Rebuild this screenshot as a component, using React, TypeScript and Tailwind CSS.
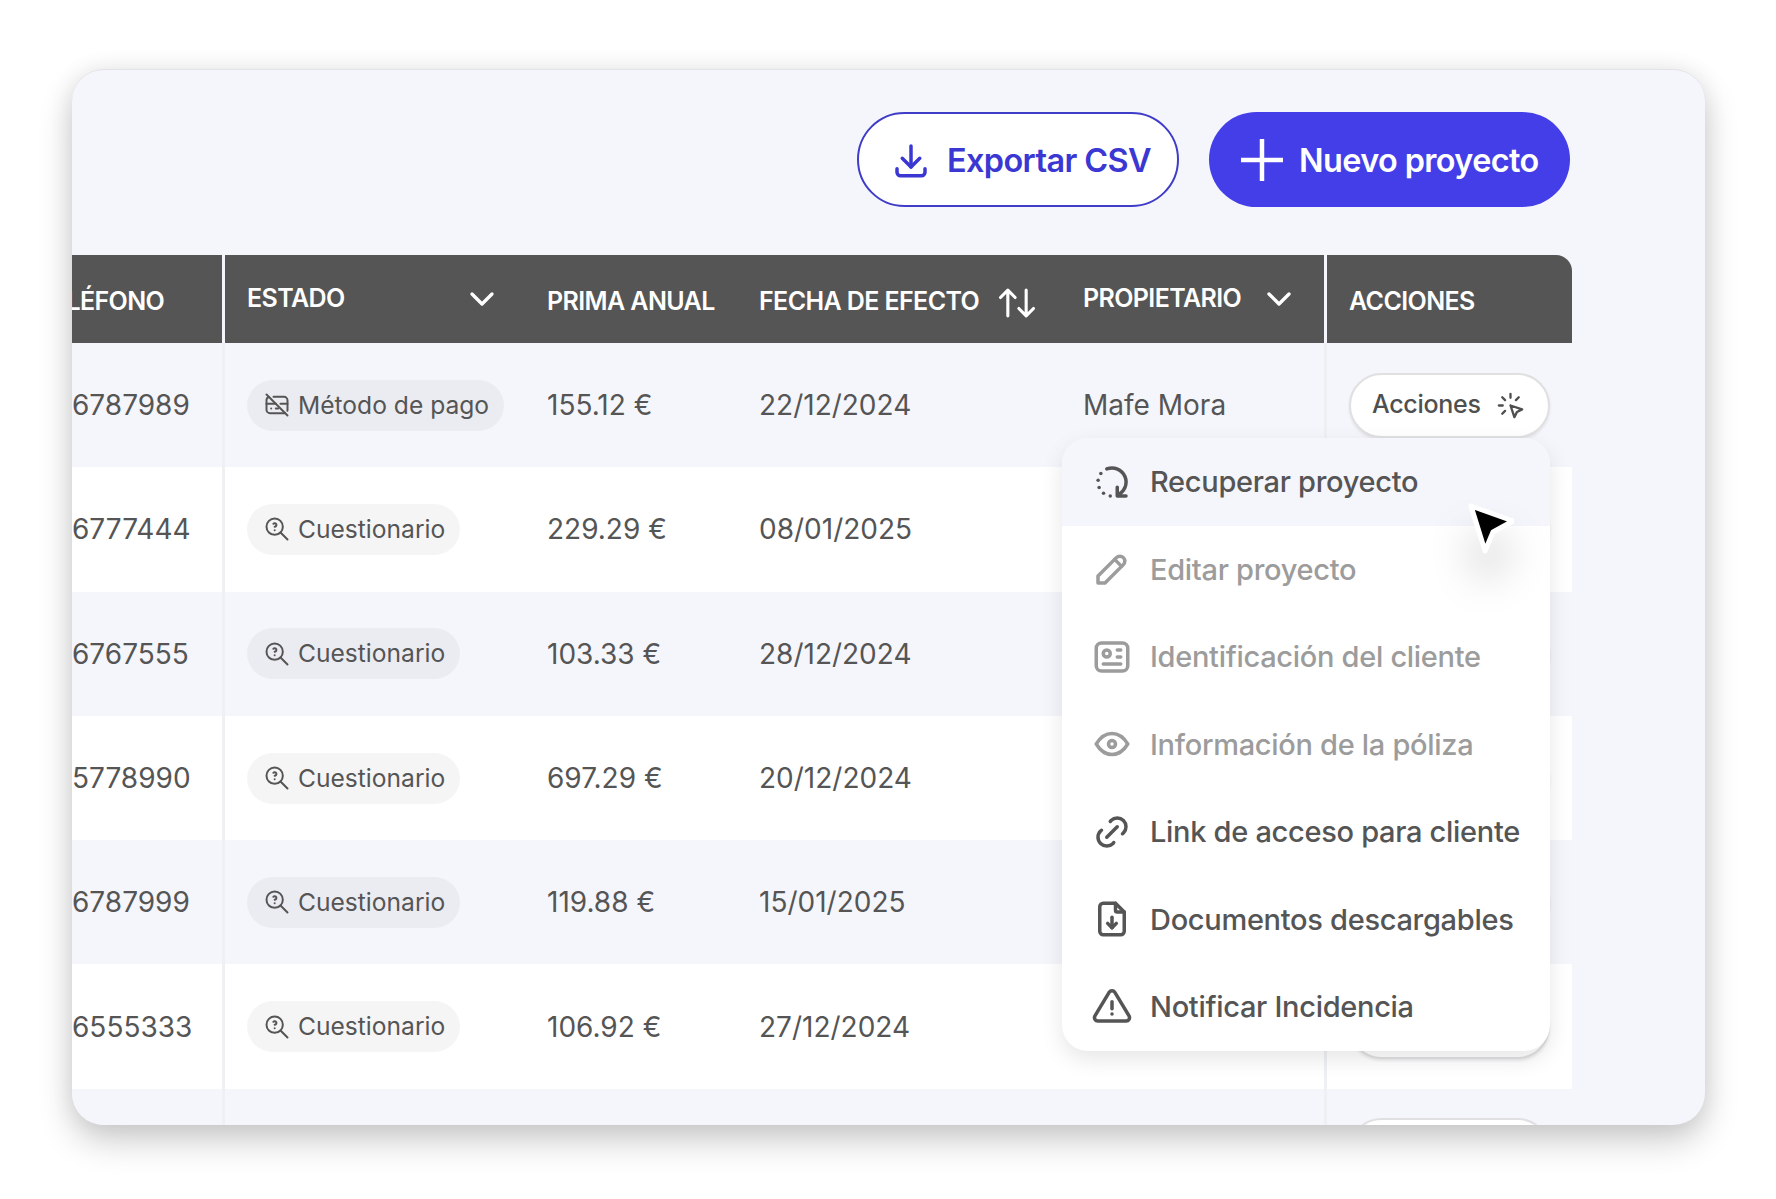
import {
  TbAlertTriangle,
  TbArrowsSort,
  TbChevronDown,
  TbClick,
  TbCreditCardOff,
  TbDownload,
  TbEye,
  TbFileDownload,
  TbId,
  TbLink,
  TbPencil,
  TbRotateClockwise2,
  TbZoomQuestion,
} from 'react-icons/tb';

const rows = [
  { phone: '6787989', status: 'Método de pago', prima: '155.12 €', date: '22/12/2024', owner: 'Mafe Mora' },
  { phone: '6777444', status: 'Cuestionario', prima: '229.29 €', date: '08/01/2025', owner: '' },
  { phone: '6767555', status: 'Cuestionario', prima: '103.33 €', date: '28/12/2024', owner: '' },
  { phone: '5778990', status: 'Cuestionario', prima: '697.29 €', date: '20/12/2024', owner: '' },
  { phone: '6787999', status: 'Cuestionario', prima: '119.88 €', date: '15/01/2025', owner: '' },
  { phone: '6555333', status: 'Cuestionario', prima: '106.92 €', date: '27/12/2024', owner: '' },
];

const menuItems = [
  { label: 'Recuperar proyecto', Icon: TbRotateClockwise2, active: true, disabled: false },
  { label: 'Editar proyecto', Icon: TbPencil, active: false, disabled: true },
  { label: 'Identificación del cliente', Icon: TbId, active: false, disabled: true },
  { label: 'Información de la póliza', Icon: TbEye, active: false, disabled: true },
  { label: 'Link de acceso para cliente', Icon: TbLink, active: false, disabled: false },
  { label: 'Documentos descargables', Icon: TbFileDownload, active: false, disabled: false },
  { label: 'Notificar Incidencia', Icon: TbAlertTriangle, active: false, disabled: false },
];

function ActionButton() {
  return (
    <button className="flex h-[65px] w-[201px] shrink-0 items-center justify-between rounded-full border-2 border-[#e0e0e2] bg-white pl-[21px] pr-[22px] text-[25px] font-medium tracking-[-0.3px] text-[#4f4f4f] shadow-[0_2px_3px_rgba(0,0,0,0.08)]">
      Acciones
      <TbClick size={31} strokeWidth={1.8} />
    </button>
  );
}

function Row({ row, index }: { row?: (typeof rows)[number]; index: number }) {
  const bg = index % 2 === 0 ? 'bg-[#f5f6fb]' : 'bg-white';
  return (
    <div className={`flex h-[124.3px] shrink-0 text-[28px] text-[#555555] ${bg}`}>
      <div className="flex w-[153px] items-center border-r-[3px] border-[#eef0f4]">{row?.phone}</div>
      <div className="flex w-[322px] items-center pl-[22px]">
        {row && (
          <span className="flex h-[51px] items-center gap-[7px] rounded-full bg-black/[0.04] pl-[16px] pr-[15px] text-[24.6px]">
            {row.status === 'Cuestionario' ? (
              <TbZoomQuestion size={28} strokeWidth={1.7} />
            ) : (
              <TbCreditCardOff size={28} strokeWidth={1.7} />
            )}
            {row.status}
          </span>
        )}
      </div>
      <div className="flex w-[212px] items-center">{row?.prima}</div>
      <div className="flex w-[324px] items-center">{row?.date}</div>
      <div className="flex w-[241px] items-center">{row?.owner}</div>
      <div className="flex w-[248px] items-center border-l-[3px] border-[#eef0f4] pl-[22px]">
        <ActionButton />
      </div>
    </div>
  );
}

export default function App() {
  return (
    <div className="h-[1199px] overflow-hidden bg-white pl-[72px] pt-[69px] font-['Inter',sans-serif]">
      <div className="relative flex h-[1056px] w-[1633px] flex-col overflow-hidden rounded-[32px] border-t border-[#e3e3e6] bg-[#f5f6fb] shadow-[0_16px_34px_rgba(0,0,0,0.2),0_0_24px_rgba(0,0,0,0.07)]">
        {/* Top actions */}
        <div className="flex h-[185px] shrink-0 items-start justify-end gap-[30px] pr-[135px] pt-[42px]">
          <button className="flex h-[95px] w-[322px] items-center gap-[15px] rounded-full border-2 border-[#3f3cc8] bg-white pl-[31px] text-[32.4px] font-semibold tracking-[-0.6px] text-[#3a37d2]">
            <TbDownload size={42} strokeWidth={2} />
            <span className="mt-[3px]">Exportar CSV</span>
          </button>
          <button className="flex h-[95px] w-[361px] items-center gap-[15px] rounded-full bg-[#433ee8] pl-[31px] text-[32.4px] font-semibold tracking-[-0.6px] text-white">
            <svg width="44" height="44" viewBox="0 0 44 44" fill="none" stroke="currentColor" strokeWidth="4.5">
              <path d="M22 1v42M1 22h42" />
            </svg>
            <span className="mt-[3px]">Nuevo proyecto</span>
          </button>
        </div>

        {/* Table */}
        <div className="flex w-[1500px] flex-col">
          <div className="flex h-[88px] shrink-0 overflow-hidden rounded-tr-[16px] bg-[#555555] text-[25px] font-semibold tracking-[-0.6px] text-white">
            <div className="flex w-[153px] items-center overflow-hidden border-r-[3px] border-[#f5f6fb]">
              <span className="ml-[-36px] mt-[6px]">TELÉFONO</span>
            </div>
            <div className="flex w-[322px] items-center justify-between pl-[22px] pr-[52px]">
              <span>ESTADO</span>
              <TbChevronDown size={40} strokeWidth={2} className="mr-[-7px]" />
            </div>
            <div className="flex w-[212px] items-center pt-[6px]">PRIMA ANUAL</div>
            <div className="flex w-[324px] items-center gap-[16px] pt-[6px]">
              FECHA DE EFECTO
              <TbArrowsSort size={44} strokeWidth={1.7} className="mt-[2px]" />
            </div>
            <div className="flex w-[241px] items-center gap-[18px]">
              PROPIETARIO
              <TbChevronDown size={40} strokeWidth={2} />
            </div>
            <div className="flex w-[248px] items-center border-l-[3px] border-[#f5f6fb] pl-[22px] pt-[6px]">ACCIONES</div>
          </div>
          {rows.map((row, i) => (
            <Row key={row.phone} row={row} index={i} />
          ))}
          <Row index={6} />
        </div>

        {/* Dropdown */}
        <div className="absolute left-[990px] top-[368px] w-[488px] overflow-hidden rounded-[26px] bg-white shadow-[0_8px_22px_rgba(0,0,0,0.1)]">
          {menuItems.map(({ label, Icon, active, disabled }) => (
            <div
              key={label}
              className={`flex h-[87.5px] items-center gap-[17px] pl-[29px] text-[29px] font-medium tracking-[-0.3px] ${
                active ? 'bg-[#f5f6fb]' : ''
              } ${disabled ? 'text-[#9c9c9c]' : 'text-[#555555]'}`}
            >
              <Icon size={42} strokeWidth={2} className="shrink-0" />
              {label}
            </div>
          ))}
        </div>

        {/* Cursor */}
        <svg
          className="absolute left-[1392px] top-[429px] drop-shadow-[0_30px_20px_rgba(0,0,0,0.2)]"
          width="50"
          height="56"
          viewBox="0 0 50 56"
        >
          <path d="M7 7L49 22L29 33L21 52Z" fill="#000" stroke="#fff" strokeWidth="5" strokeLinejoin="round" />
        </svg>
      </div>
    </div>
  );
}
